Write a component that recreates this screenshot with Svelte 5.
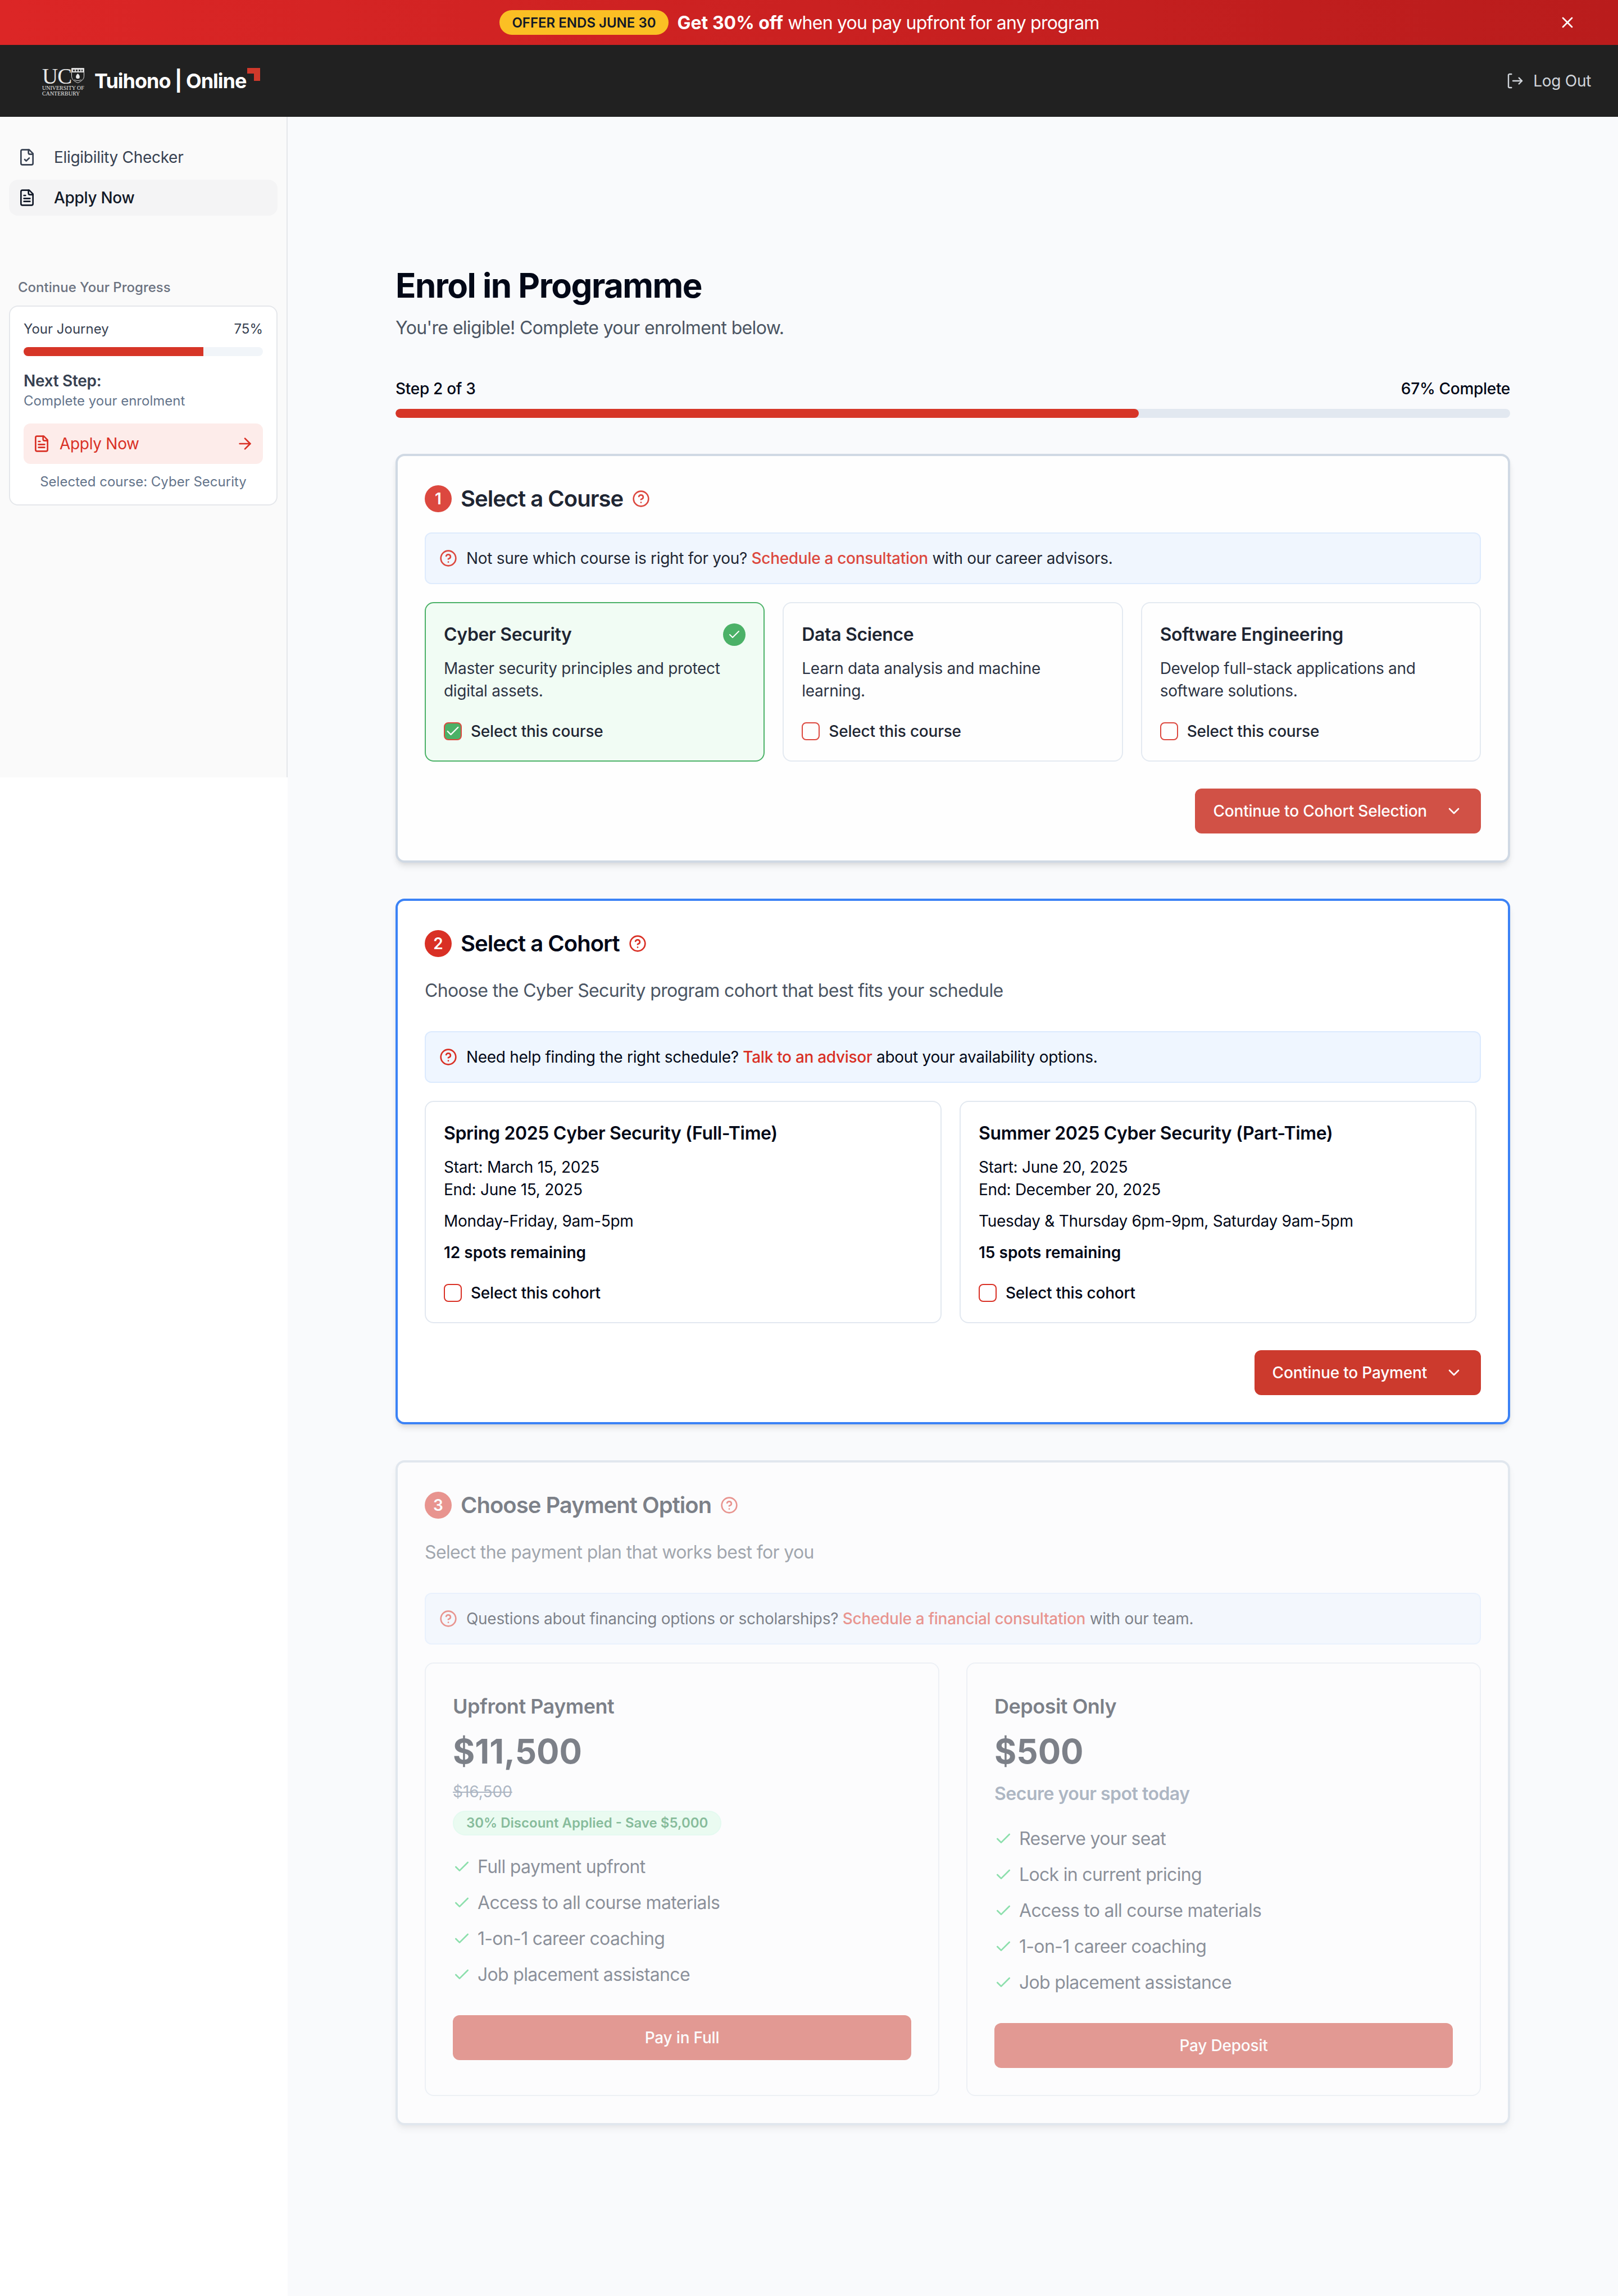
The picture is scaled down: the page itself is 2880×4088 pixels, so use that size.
<script lang="ts">
  const courses = [
    { title: 'Cyber Security', text: 'Master security principles and protect digital assets.', selected: true },
    { title: 'Data Science', text: 'Learn data analysis and machine learning.', selected: false },
    { title: 'Software Engineering', text: 'Develop full-stack applications and software solutions.', selected: false },
  ];

  const cohorts = [
    { title: 'Spring 2025 Cyber Security (Full-Time)', start: 'March 15, 2025', end: 'June 15, 2025', times: 'Monday-Friday, 9am-5pm', spots: 12 },
    { title: 'Summer 2025 Cyber Security (Part-Time)', start: 'June 20, 2025', end: 'December 20, 2025', times: 'Tuesday & Thursday 6pm-9pm, Saturday 9am-5pm', spots: 15 },
  ];

  const upfrontItems = ['Full payment upfront', 'Access to all course materials', '1-on-1 career coaching', 'Job placement assistance'];
  const depositItems = ['Reserve your seat', 'Lock in current pricing', 'Access to all course materials', '1-on-1 career coaching', 'Job placement assistance'];
</script>

{#snippet help(cls = 'help')}
  <svg class={cls} viewBox="0 0 24 24" fill="none" stroke="currentColor" stroke-width="2" stroke-linecap="round" stroke-linejoin="round">
    <circle cx="12" cy="12" r="10" />
    <path d="M9.09 9a3 3 0 0 1 5.83 1c0 2-3 3-3 3" />
    <path d="M12 17h.01" />
  </svg>
{/snippet}

{#snippet check(cls = 'check')}
  <svg class={cls} viewBox="0 0 24 24" fill="none" stroke="currentColor" stroke-width="2" stroke-linecap="round" stroke-linejoin="round">
    <path d="M20 6 9 17l-5-5" />
  </svg>
{/snippet}

{#snippet chevron()}
  <svg class="icon" viewBox="0 0 24 24" fill="none" stroke="currentColor" stroke-width="2" stroke-linecap="round" stroke-linejoin="round">
    <path d="m6 9 6 6 6-6" />
  </svg>
{/snippet}

{#snippet fileIcon(kind = 'text')}
  <svg class="icon" viewBox="0 0 24 24" fill="none" stroke="currentColor" stroke-width="2" stroke-linecap="round" stroke-linejoin="round">
    <path d="M15 2H6a2 2 0 0 0-2 2v16a2 2 0 0 0 2 2h12a2 2 0 0 0 2-2V7Z" />
    <path d="M14 2v4a2 2 0 0 0 2 2h4" />
    {#if kind === 'check'}
      <path d="m9 15 2 2 4-4" />
    {:else}
      <path d="M10 9H8" /><path d="M16 13H8" /><path d="M16 17H8" />
    {/if}
  </svg>
{/snippet}

{#snippet infoBox(before, link, after)}
  <div class="info">
    {@render help()}
    <p>{before} <a href="#top">{link}</a> {after}</p>
  </div>
{/snippet}

{#snippet planList(items)}
  <ul class="plan-list">
    {#each items as item}
      <li>{@render check('list-check')}<span>{item}</span></li>
    {/each}
  </ul>
{/snippet}

<div class="banner">
  <span class="offer">OFFER ENDS JUNE 30</span>
  <span class="banner-text"><strong>Get 30% off</strong> when you pay upfront for any program</span>
  <button class="close" aria-label="Close">
    <svg class="icon" viewBox="0 0 24 24" fill="none" stroke="currentColor" stroke-width="2" stroke-linecap="round" stroke-linejoin="round">
      <path d="M18 6 6 18" /><path d="m6 6 12 12" />
    </svg>
  </button>
</div>

<header class="topbar">
  <div class="logo">
    <div class="uc">
      <div class="uc-row">
        <span class="uc-letters">UC</span>
        <svg class="crest" viewBox="0 0 23 27">
          <path d="M0.5 0.5h22v14c0 6-5 9.500-11 12-6-2.500-11-6-11-12z" fill="#212121" stroke="#e8e8e8" stroke-width="1" />
          <rect x="1" y="1" width="21" height="7" fill="#d8d8d8" />
          <path d="M3 3h3v3H3zM8 3h3v3H8zM13 3h3v3h-3zM18 3h2v3h-2z" fill="#333" />
          <path d="M11.500 10c-3 2-4 5-3 8 1 1.500 5 1.500 6 0 1-3 0-6-3-8z" fill="#e8e8e8" />
          <path d="M5 21c4 2 9 2 13 0" stroke="#e8e8e8" fill="none" />
        </svg>
      </div>
      <span class="uc-small">UNIVERSITY OF</span>
      <span class="uc-small">CANTERBURY</span>
    </div>
    <span class="wordmark">Tuihono | Online</span>
    <svg class="corner" viewBox="0 0 23 23"><path d="M0 0h23v23H12V10H0z" fill="#d0392b" /></svg>
  </div>
  <a class="logout" href="#top">
    <svg class="logout-icon" viewBox="0 0 24 24" fill="none" stroke="currentColor" stroke-width="1.800" stroke-linecap="round" stroke-linejoin="round">
      <path d="M7 3H4a2 2 0 0 0-1 1v16a2 2 0 0 0 1 1h3" />
      <path d="m17 16 4-4-4-4" /><path d="M21 12H9" />
    </svg>
    Log Out
  </a>
</header>

<div class="layout" id="top">
  <aside class="sidebar">
    <nav class="nav">
      <a class="nav-item" href="#top">{@render fileIcon('check')}Eligibility Checker</a>
      <a class="nav-item active" href="#top">{@render fileIcon('text')}Apply Now</a>
    </nav>

    <p class="progress-label">Continue Your Progress</p>
    <div class="journey">
      <div class="journey-head"><span>Your Journey</span><span>75%</span></div>
      <div class="journey-track"><div class="journey-fill" style="width: 75%"></div></div>
      <p class="next-title">Next Step:</p>
      <p class="next-text">Complete your enrolment</p>
      <a class="next-btn" href="#top">
        {@render fileIcon('text')}
        <span>Apply Now</span>
        <svg class="icon arrow" viewBox="0 0 24 24" fill="none" stroke="currentColor" stroke-width="2" stroke-linecap="round" stroke-linejoin="round">
          <path d="M5 12h14" /><path d="m12 5 7 7-7 7" />
        </svg>
      </a>
      <p class="selected">Selected course: Cyber Security</p>
    </div>
  </aside>

  <main class="main">
    <div class="content">
      <h1>Enrol in Programme</h1>
      <p class="lead">You're eligible! Complete your enrolment below.</p>

      <div class="step-row"><span>Step 2 of 3</span><span>67% Complete</span></div>
      <div class="step-track"><div class="step-fill" style="width: 66.67%"></div></div>

      <section class="card done">
        <div class="card-head">
          <span class="num">1</span>
          <h2>Select a Course</h2>
          {@render help()}
        </div>
        {@render infoBox('Not sure which course is right for you?', 'Schedule a consultation', 'with our career advisors.')}
        <div class="courses">
          {#each courses as course}
            <div class="course" class:selected-course={course.selected}>
              <div class="course-head">
                <h3>{course.title}</h3>
                {#if course.selected}
                  <span class="tick">{@render check('tick-icon')}</span>
                {/if}
              </div>
              <p class="course-text">{course.text}</p>
              <label class="pick">
                <span class="box" class:on={course.selected}>
                  {#if course.selected}{@render check('box-check')}{/if}
                </span>
                Select this course
              </label>
            </div>
          {/each}
        </div>
        <div class="actions">
          <button class="primary">Continue to Cohort Selection {@render chevron()}</button>
        </div>
      </section>

      <section class="card current">
        <div class="card-head">
          <span class="num">2</span>
          <h2>Select a Cohort</h2>
          {@render help()}
        </div>
        <p class="card-sub">Choose the Cyber Security program cohort that best fits your schedule</p>
        {@render infoBox('Need help finding the right schedule?', 'Talk to an advisor', 'about your availability options.')}
        <div class="cohorts">
          {#each cohorts as cohort}
            <div class="cohort">
              <h3>{cohort.title}</h3>
              <p class="dates">Start: {cohort.start}<br />End: {cohort.end}</p>
              <p class="line">{cohort.times}</p>
              <p class="line spots">{cohort.spots} spots remaining</p>
              <label class="pick">
                <span class="box"></span>
                Select this cohort
              </label>
            </div>
          {/each}
        </div>
        <div class="actions">
          <button class="primary">Continue to Payment {@render chevron()}</button>
        </div>
      </section>

      <section class="card upcoming">
        <div class="card-head">
          <span class="num">3</span>
          <h2>Choose Payment Option</h2>
          {@render help()}
        </div>
        <p class="card-sub">Select the payment plan that works best for you</p>
        {@render infoBox('Questions about financing options or scholarships?', 'Schedule a financial consultation', 'with our team.')}
        <div class="plans">
          <div class="plan">
            <h3>Upfront Payment</h3>
            <p class="price">$11,500</p>
            <p class="was">$16,500</p>
            <span class="saving">30% Discount Applied - Save $5,000</span>
            {@render planList(upfrontItems)}
            <button class="pay">Pay in Full</button>
          </div>
          <div class="plan">
            <h3>Deposit Only</h3>
            <p class="price">$500</p>
            <p class="plan-note">Secure your spot today</p>
            {@render planList(depositItems)}
            <button class="pay">Pay Deposit</button>
          </div>
        </div>
      </section>
    </div>
  </main>
</div>

<style>
  :global(body) {
    margin: 0;
    background: #fff;
    font-family: Inter, 'Liberation Sans', sans-serif;
    color: #020817;
  }

  h1, h2, h3, p, ul {
    margin: 0;
    padding: 0;
  }

  a {
    color: inherit;
    text-decoration: none;
  }

  button {
    font-family: inherit;
    border: none;
  }

  .icon {
    width: 32px;
    height: 32px;
    flex-shrink: 0;
  }

  .banner {
    position: relative;
    height: 80px;
    box-sizing: border-box;
    padding-right: 34px;
    display: flex;
    align-items: center;
    justify-content: center;
    gap: 16px;
    background: linear-gradient(90deg, #dc2626, #b91c1c);
    color: #fff;
  }

  .offer {
    height: 44px;
    padding: 0 22px;
    display: flex;
    align-items: center;
    border-radius: 22px;
    background: #fbbf24;
    color: #111827;
    font-size: 24px;
    font-weight: 600;
    white-space: nowrap;
  }

  .banner-text {
    font-size: 32px;
    letter-spacing: -0.780px;
  }

  .banner-text strong {
    font-weight: 700;
    letter-spacing: 0;
  }

  .close {
    position: absolute;
    right: 74px;
    top: 24px;
    width: 32px;
    height: 32px;
    padding: 0;
    background: none;
    color: #fff;
  }

  .topbar {
    height: 128px;
    box-sizing: border-box;
    padding: 0 48px 0 75px;
    display: flex;
    align-items: center;
    justify-content: space-between;
    background: #212121;
  }

  .logo {
    display: flex;
    align-items: flex-start;
    height: 52px;
    margin-top: 6px;
    color: #fff;
  }

  .uc {
    display: flex;
    flex-direction: column;
    width: 76px;
    color: #e8e8e8;
    font-family: 'Liberation Serif', serif;
  }

  .uc-row {
    display: flex;
    align-items: flex-start;
    height: 31px;
  }

  .uc-letters {
    font-size: 39px;
    line-height: 30px;
    letter-spacing: -1px;
  }

  .crest {
    width: 23px;
    height: 27px;
  }

  .uc-small {
    font-size: 10px;
    line-height: 10px;
    white-space: nowrap;
  }

  .wordmark {
    width: 274px;
    margin: 1px 0 0 17px;
    font-size: 36px;
    line-height: 44px;
    font-weight: 700;
    letter-spacing: -1px;
    white-space: nowrap;
  }

  .corner {
    width: 23px;
    height: 23px;
    margin-left: -2px;
  }

  .logout {
    display: flex;
    align-items: center;
    gap: 16px;
    font-size: 28px;
    letter-spacing: -0.300px;
    color: #d1d5db;
  }

  .logout-icon {
    width: 32px;
    height: 32px;
  }

  .layout {
    display: flex;
    align-items: flex-start;
  }

  .sidebar {
    width: 512px;
    height: 1176px;
    flex-shrink: 0;
    box-sizing: border-box;
    padding: 40px 16px;
    background: #fafafa;
    border-right: 2px solid #e5e7eb;
  }

  .nav {
    display: flex;
    flex-direction: column;
    gap: 8px;
  }

  .nav-item {
    height: 64px;
    box-sizing: border-box;
    padding: 0 16px;
    display: flex;
    align-items: center;
    gap: 32px;
    border-radius: 16px;
    font-size: 28px;
    letter-spacing: -0.300px;
    color: #374151;
  }

  .nav-item.active {
    background: #f4f4f5;
    color: #111827;
    font-weight: 500;
  }

  .progress-label {
    margin: 112px 0 0 16px;
    font-size: 24px;
    line-height: 32px;
    font-weight: 500;
    color: #6b7280;
  }

  .journey {
    margin-top: 16px;
    height: 356px;
    box-sizing: border-box;
    padding: 24px;
    background: #fff;
    border: 2px solid #e5e7eb;
    border-radius: 16px;
  }

  .journey-head {
    display: flex;
    justify-content: space-between;
    font-size: 24px;
    line-height: 32px;
    color: #374151;
  }

  .journey-track {
    margin-top: 16px;
    height: 16px;
    border-radius: 8px;
    overflow: hidden;
    background: #f1f5f9;
  }

  .journey-fill {
    height: 100%;
    background: #d63527;
  }

  .next-title {
    margin-top: 24px;
    font-size: 28px;
    line-height: 40px;
    font-weight: 600;
    letter-spacing: -0.300px;
    color: #374151;
  }

  .next-text {
    font-size: 24px;
    line-height: 32px;
    color: #64748b;
  }

  .next-btn {
    margin-top: 24px;
    height: 72px;
    box-sizing: border-box;
    padding: 0 16px;
    display: flex;
    align-items: center;
    gap: 16px;
    border-radius: 12px;
    background: #fdecea;
    color: #d93025;
    font-size: 28px;
    letter-spacing: -0.300px;
  }

  .arrow {
    margin-left: auto;
  }

  .selected {
    margin-top: 16px;
    text-align: center;
    font-size: 24px;
    line-height: 32px;
    color: #64748b;
  }

  .main {
    flex: 1;
    min-height: 3880px;
    background: #f9fafc;
  }

  .content {
    width: 1984px;
    margin: 0 auto;
    padding-top: 264px;
  }

  h1 {
    font-size: 60px;
    line-height: 72px;
    font-weight: 700;
    letter-spacing: -1.500px;
  }

  .lead {
    margin-top: 16px;
    font-size: 32px;
    line-height: 48px;
    letter-spacing: -0.640px;
    color: #4b5563;
  }

  .step-row {
    margin-top: 64px;
    display: flex;
    justify-content: space-between;
    font-size: 28px;
    line-height: 40px;
    font-weight: 500;
    letter-spacing: -0.300px;
  }

  .step-track {
    margin-top: 16px;
    height: 16px;
    border-radius: 8px;
    overflow: hidden;
    background: #e2e8f0;
  }

  .step-fill {
    height: 100%;
    border-radius: 8px;
    background: #d63527;
  }

  .card {
    margin-top: 64px;
    padding: 48px;
    background: #fff;
    border: 4px solid #cbd5e1;
    border-radius: 16px;
    box-shadow: 0 8px 12px -2px rgba(0, 0, 0, 0.1), 0 4px 8px -4px rgba(0, 0, 0, 0.1);
  }

  .card.done {
    opacity: 0.88;
  }

  .card.current {
    border-color: #3b82f6;
  }

  .card.upcoming {
    opacity: 0.5;
  }

  .card-head {
    height: 56px;
    display: flex;
    align-items: center;
    gap: 16px;
    margin-bottom: 32px;
  }

  .num {
    width: 48px;
    height: 48px;
    border-radius: 50%;
    display: flex;
    align-items: center;
    justify-content: center;
    background: #d93025;
    color: #fff;
    font-size: 28px;
    font-weight: 600;
  }

  h2 {
    font-size: 40px;
    line-height: 56px;
    font-weight: 600;
    letter-spacing: -1px;
  }

  .help {
    width: 32px;
    height: 32px;
    flex-shrink: 0;
    color: #d93025;
  }

  .card-sub {
    margin-bottom: 48px;
    font-size: 32px;
    line-height: 48px;
    letter-spacing: -0.640px;
    color: #4b5563;
  }

  .info {
    padding: 24px;
    display: flex;
    align-items: center;
    gap: 16px;
    background: #eff6ff;
    border: 2px solid #dbeafe;
    border-radius: 12px;
  }

  .info p {
    font-size: 28px;
    line-height: 40px;
    letter-spacing: -0.300px;
  }

  .info a {
    color: #d93025;
    font-weight: 500;
  }

  .courses {
    margin-top: 32px;
    display: grid;
    grid-template-columns: repeat(3, 1fr);
    gap: 32px;
  }

  .course {
    padding: 32px;
    background: #fff;
    border: 2px solid #e2e8f0;
    border-radius: 16px;
  }

  .course.selected-course {
    background: #f0fdf4;
    border-color: #34a853;
  }

  .course-head {
    height: 48px;
    display: flex;
    align-items: center;
    justify-content: space-between;
  }

  h3 {
    font-size: 32px;
    line-height: 48px;
    font-weight: 600;
    letter-spacing: -0.350px;
  }

  .tick {
    width: 40px;
    height: 40px;
    border-radius: 50%;
    display: flex;
    align-items: center;
    justify-content: center;
    background: #34a853;
    color: #fff;
  }

  .tick-icon {
    width: 24px;
    height: 24px;
  }

  .course-text {
    margin-top: 16px;
    font-size: 28px;
    line-height: 40px;
    letter-spacing: -0.300px;
    color: #0f172a;
  }

  .pick {
    margin-top: 32px;
    height: 40px;
    display: flex;
    align-items: center;
    gap: 16px;
    font-size: 28px;
    font-weight: 500;
    letter-spacing: -0.220px;
  }

  .box {
    width: 32px;
    height: 32px;
    box-sizing: border-box;
    display: flex;
    align-items: center;
    justify-content: center;
    border: 2px solid #d93025;
    border-radius: 8px;
    background: #fff;
  }

  .box.on {
    background: #34a853;
    color: #fff;
  }

  .box-check {
    width: 28px;
    height: 28px;
    flex-shrink: 0;
  }

  .actions {
    margin-top: 48px;
    display: flex;
    justify-content: flex-end;
  }

  .primary {
    height: 80px;
    padding: 0 32px;
    display: flex;
    align-items: center;
    gap: 32px;
    border-radius: 12px;
    background: #cc3a2d;
    color: #fff;
    font-size: 28px;
    font-weight: 500;
    letter-spacing: -0.200px;
  }

  .cohorts {
    margin-top: 32px;
    display: grid;
    grid-template-columns: repeat(2, 920px);
    gap: 32px;
  }

  .cohort {
    padding: 32px;
    border: 2px solid #e2e8f0;
    border-radius: 16px;
  }

  .dates {
    margin-top: 16px;
    font-size: 28px;
    line-height: 40px;
    letter-spacing: -0.300px;
  }

  .line {
    margin-top: 16px;
    font-size: 28px;
    line-height: 40px;
    letter-spacing: -0.300px;
  }

  .spots {
    font-weight: 600;
    letter-spacing: 0;
  }

  .plans {
    margin-top: 32px;
    display: grid;
    grid-template-columns: repeat(2, 1fr);
    gap: 48px;
  }

  .plan {
    padding: 48px;
    border: 2px solid #e2e8f0;
    border-radius: 16px;
  }

  .plan h3 {
    font-size: 36px;
    line-height: 56px;
    letter-spacing: -0.500px;
  }

  .price {
    margin-top: 16px;
    font-size: 60px;
    line-height: 72px;
    font-weight: 700;
  }

  .was {
    margin-top: 16px;
    font-size: 28px;
    line-height: 40px;
    color: #64748b;
    text-decoration: line-through;
  }

  .saving {
    margin-top: 14px;
    display: block;
    width: fit-content;
    padding: 4px 22px;
    background: #dcfce7;
    border: 2px solid #d1fae5;
    border-radius: 22px;
    color: #15803d;
    font-size: 24px;
    line-height: 32px;
    font-weight: 600;
  }

  .plan-note {
    margin-top: 16px;
    font-size: 32px;
    line-height: 48px;
    font-weight: 600;
    letter-spacing: -0.500px;
    color: #64748b;
  }

  .plan-list {
    margin-top: 32px;
    list-style: none;
  }

  .plan-list li {
    margin-bottom: 16px;
    display: flex;
    align-items: center;
    gap: 12px;
    font-size: 32px;
    line-height: 48px;
    letter-spacing: -0.680px;
    color: #1e293b;
  }

  .list-check {
    width: 32px;
    height: 32px;
    flex-shrink: 0;
    color: #22c55e;
  }

  .pay {
    margin-top: 32px;
    width: 100%;
    height: 80px;
    border-radius: 12px;
    background: #cc3a2d;
    color: #fff;
    font-size: 28px;
    font-weight: 500;
    letter-spacing: -0.200px;
  }
</style>
